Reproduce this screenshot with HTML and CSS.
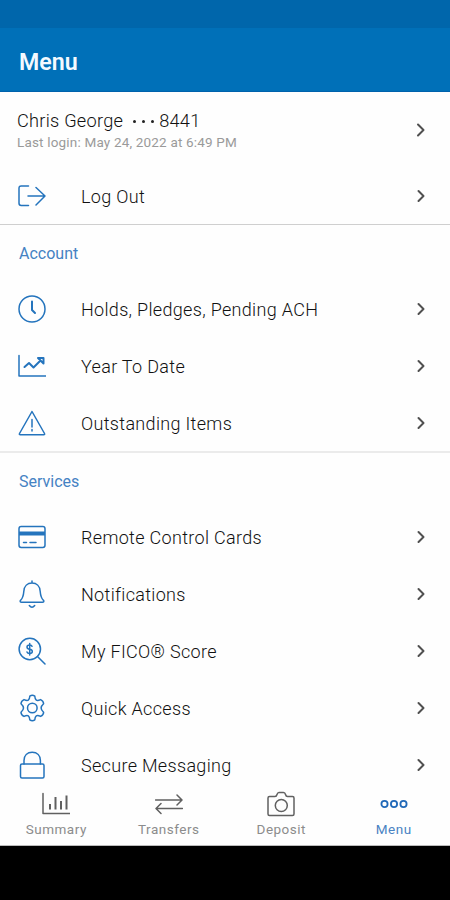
FILE: index.html
```html
<!DOCTYPE html>
<html lang="en">
<head>
<meta charset="utf-8">
<meta name="viewport" content="width=device-width, initial-scale=1">
<title>Menu</title>
<link rel="stylesheet" href="styles.css">
</head>
<body>
<div class="app">
  <div class="status-bar"></div>
  <header class="header"><h1>Menu</h1></header>
  <main class="content">
    <div class="profile">
      <div class="profile-text">
        <div class="name"><span>Chris George</span><span class="dots"><i></i><i></i><i></i></span><span>8441</span></div>
        <div class="last-login">Last login: May 24, 2022 at 6:49 PM</div>
      </div>
      <svg class="chevron large" viewBox="0 0 10 14"><path d="M2 1.500 7.500 7 2 12.500"/></svg>
    </div>
    <section class="group">
      <div class="row">
        <svg class="icon" viewBox="0 0 28 28"><path d="M10.500 4H3.200Q1 4 1 6.200v15.100q0 2.200 2.200 2.200h7.300M10 14h17M18 5.500l9 8.500-9 9"/></svg>
        <span class="label">Log Out</span>
        <svg class="chevron" viewBox="0 0 10 14"><path d="M2.500 2l5 5-5 5"/></svg>
      </div>
    </section>
    <section class="group">
      <h2>Account</h2>
      <div class="row">
        <svg class="icon" viewBox="0 0 28 28"><circle cx="14" cy="14" r="13"/><path class="bold" d="M14 6.500v8.500l3 3"/></svg>
        <span class="label">Holds, Pledges, Pending ACH</span>
        <svg class="chevron" viewBox="0 0 10 14"><path d="M2.500 2l5 5-5 5"/></svg>
      </div>
      <div class="row">
        <svg class="icon" viewBox="0 0 28 28"><path d="M1 3.500v20.500h27"/><path class="bold" d="M6.500 15l4.500-4 4.500 4.500 7-7M20 6h5.500v5.500z"/></svg>
        <span class="label">Year To Date</span>
        <svg class="chevron" viewBox="0 0 10 14"><path d="M2.500 2l5 5-5 5"/></svg>
      </div>
      <div class="row">
        <svg class="icon" viewBox="0 0 28 28"><path d="M14 2.500 1.500 24.500q-.6 1.200.8 1.200h23.400q1.400 0 .8-1.200z"/><path d="M14 10.500v7.500M14 20.500v1.500"/></svg>
        <span class="label">Outstanding Items</span>
        <svg class="chevron" viewBox="0 0 10 14"><path d="M2.500 2l5 5-5 5"/></svg>
      </div>
    </section>
    <section class="group">
      <h2>Services</h2>
      <div class="row">
        <svg class="icon" viewBox="0 0 28 28"><rect x="1" y="3.500" width="26" height="21" rx="2.200"/><path class="stripe" d="M1 10.500h26"/><path d="M5.500 19.500h3M12 19.500h6"/></svg>
        <span class="label">Remote Control Cards</span>
        <svg class="chevron" viewBox="0 0 10 14"><path d="M2.500 2l5 5-5 5"/></svg>
      </div>
      <div class="row">
        <svg class="icon" viewBox="0 0 28 28"><path d="M14 1v2M3.500 22.200q-1.800 0-1.200-1.600Q5.300 18 5.800 11.500C6 6 9.500 3 14 3s8 3 8.200 8.500q.5 6.500 3.500 9.100.6 1.600-1.200 1.600zM11.300 25.500q2.700 3.500 5.400 0"/></svg>
        <span class="label">Notifications</span>
        <svg class="chevron" viewBox="0 0 10 14"><path d="M2.500 2l5 5-5 5"/></svg>
      </div>
      <div class="row">
        <svg class="icon" viewBox="0 0 28 28"><circle cx="11.800" cy="12" r="10.700"/><path d="M19.500 19.500l7.500 7.500M14 9.300Q13.500 8 11.700 8 9 8 9 10t2.700 2.200q2.600.3 2.600 2.200t-2.600 2Q9.500 16.400 9 15M11.700 6.500v11.500"/></svg>
        <span class="label">My FICO® Score</span>
        <svg class="chevron" viewBox="0 0 10 14"><path d="M2.500 2l5 5-5 5"/></svg>
      </div>
      <div class="row">
        <svg class="icon" viewBox="0 0 28 28"><circle cx="14.300" cy="14" r="4.800"/><path d="M11.800 2.200Q14.300.4 16.800 2.200q.2 3 1.500 3.900t4.300-.5q3 1.500 3 4.200-2.500 2.200-2.500 4.200t2.500 4.200q0 2.700-3 4.200-3-1.400-4.300-.5t-1.500 3.900q-2.500 1.800-5 0-.2-3-1.500-3.900t-4.300.5q-3-1.500-3-4.200 2.500-2.200 2.500-4.200T3 9.800q0-2.700 3-4.200 3 1.400 4.300.5t1.500-3.900z"/></svg>
        <span class="label">Quick Access</span>
        <svg class="chevron" viewBox="0 0 10 14"><path d="M2.500 2l5 5-5 5"/></svg>
      </div>
      <div class="row">
        <svg class="icon" viewBox="0 0 28 28"><rect x="2.500" y="13" width="23.500" height="14" rx="1.500"/><path d="M6 13V9.500C6 4.500 9.300 1.200 14.200 1.200s8.200 3.300 8.200 8.300V13"/></svg>
        <span class="label">Secure Messaging</span>
        <svg class="chevron" viewBox="0 0 10 14"><path d="M2.500 2l5 5-5 5"/></svg>
      </div>
    </section>
  </main>
  <nav class="tabs">
    <a class="tab"><svg viewBox="0 0 28 28"><path d="M1 3.500v20h27"/><path class="bars" d="M8 14v5.500M13.500 7v12.500M19 11v8.500M24.500 5.500v14"/></svg><span>Summary</span></a>
    <a class="tab"><svg viewBox="0 0 28 28"><path d="M.5 10h26M22 5l5 5-5 5M27.500 18.500h-26M6 13.500l-5 5 5 5"/></svg><span>Transfers</span></a>
    <a class="tab"><svg viewBox="0 0 28 28"><path d="M2.500 6.500H8q1.500 0 2-2 .6-2 2-2h4.500q1.500 0 2 2t2 2h5q1.500 0 1.500 1.500v16q0 1.500-1.500 1.500h-23Q1 25.500 1 24V8q0-1.500 1.500-1.500z"/><circle cx="14.300" cy="15.500" r="6"/></svg><span>Deposit</span></a>
    <a class="tab active"><svg viewBox="0 0 28 28"><circle cx="4.500" cy="14" r="3.100"/><circle cx="14" cy="14" r="3.100"/><circle cx="23.500" cy="14" r="3.100"/></svg><span>Menu</span></a>
  </nav>
  <div class="system-bar"></div>
</div>
</body>
</html>
```

FILE: styles.css
```css
* { box-sizing: border-box; }
body { margin: 0; font-family: Roboto, "Liberation Sans", sans-serif; background: #fff; }
.app { width: 450px; height: 900px; display: flex; flex-direction: column; overflow: hidden; }
.status-bar { flex: none; height: 28px; background: #0066ab; }
.header { flex: none; height: 64px; display: flex; align-items: center; padding: 4px 19px 0; background: #0070b8; border-bottom: 1px solid #0062ac; }
.header h1 { margin: 0; color: #f4faff; font-size: 23.200px; line-height: 28px; font-weight: 600; }
.content { flex: 1; min-height: 0; overflow: hidden; background: #fefefe; }
.profile { height: 75px; display: flex; align-items: center; justify-content: space-between; padding: 1px 24px 0 17px; }
.name { display: flex; align-items: center; font-size: 18.200px; line-height: 24px; font-weight: 300; color: #111; letter-spacing: .25px; }
.dots { display: flex; gap: 6px; margin: 0 5px 0 10px; }
.dots i { width: 3px; height: 3px; border-radius: 50%; background: #222; }
.last-login { font-size: 13.500px; line-height: 18px; color: #9a9a9a; letter-spacing: .18px; }
.group { border-bottom: 2px solid #ebebeb; }
.profile + .group { border-bottom: 1px solid #cfcfcf; }
.group h2 { margin: 0; height: 55px; padding: 0 19px; font-size: 16px; line-height: 57px; font-weight: 400; color: #4582c3; }
.row { height: 57px; display: flex; align-items: center; padding: 0 24px 0 18px; }
.icon { width: 28px; height: 28px; margin-right: 35px; }
.icon, .chevron, .tab svg { flex: none; fill: none; stroke-linecap: round; stroke-linejoin: round; }
.icon { stroke: #2474bd; stroke-width: 1.500; }
.icon .bold { stroke-width: 2; }
.icon .stripe { stroke-width: 4; stroke-linecap: butt; }
.label { flex: 1; font-size: 18px; line-height: 24px; font-weight: 300; color: #111; letter-spacing: .32px; padding-top: 3px; }
.chevron { width: 10px; height: 14px; stroke: #505050; stroke-width: 2; }
.tabs { flex: none; height: 61px; display: grid; grid-template-columns: repeat(4, 1fr); background: #fefefe; border-bottom: 1px solid #bbb; }
.tab { display: flex; flex-direction: column; align-items: center; padding: 5px 0 0; color: #8c8c8c; font-size: 13.500px; line-height: 18px; letter-spacing: .5px; }
.tab svg { width: 28px; height: 28px; stroke: #606060; stroke-width: 1.500; }
.tab span { margin-top: 2px; }
.tab .bars { stroke-width: 2; stroke-linecap: butt; }
.tab.active { color: #4a83c3; }
.tab.active svg { stroke: #2068b8; stroke-width: 1.800; }
.system-bar { flex: none; height: 54px; background: #000; }
```
